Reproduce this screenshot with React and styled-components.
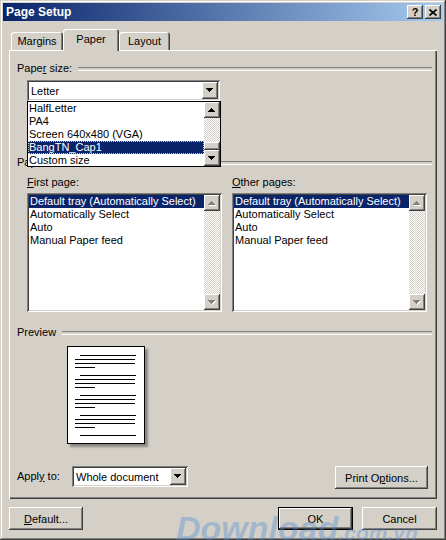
import React from 'react'
import styled, { createGlobalStyle } from 'styled-components'

const GlobalStyle = createGlobalStyle`
  body { margin: 0; background: #d4d0c8; }
  * { box-sizing: border-box; }
`

const raised = `box-shadow: inset -1px -1px #404040, inset 1px 1px #fff, inset -2px -2px #808080, inset 2px 2px #d4d0c8;`
const sunken = `box-shadow: inset 1px 1px #808080, inset -1px -1px #fff, inset 2px 2px #404040, inset -2px -2px #d4d0c8;`

const Window = styled.div`
  position: relative;
  width: 446px;
  height: 540px;
  padding-top: 3px;
  background: #d4d0c8;
  font-family: "Liberation Sans", Arial, sans-serif;
  font-size: 11px;
  color: #000;
  overflow: hidden;
  box-shadow: inset -1px -1px #404040, inset 1px 1px #d4d0c8, inset -2px -2px #808080, inset 2px 2px #fff;
`

const TitleBar = styled.div`
  margin: 0 3px;
  height: 18px;
  padding: 0 2px 0 3px;
  display: flex;
  align-items: center;
  justify-content: space-between;
  background: linear-gradient(to right, #0a246a, #a6caf0);
`

const Title = styled.span`
  color: #fff;
  font-weight: bold;
  font-size: 12px;
`

const TitleButtons = styled.div`
  display: flex;
  gap: 2px;
`

const TitleButton = styled.div`
  width: 16px;
  height: 14px;
  background: #d4d0c8;
  ${raised}
  display: flex;
  align-items: center;
  justify-content: center;
  font-weight: bold;
  font-size: 11px;
  line-height: 14px;
`

const Body = styled.div`
  padding: 8px 9px 0;
`

const Tabs = styled.div`
  display: flex;
  align-items: flex-end;
  height: 21px;
  padding-left: 2px;
`

const Tab = styled.div`
  position: relative;
  z-index: ${p => (p.$active ? 2 : 0)};
  width: ${p => p.$w}px;
  height: ${p => (p.$active ? 22 : 18)}px;
  margin-bottom: ${p => (p.$active ? -1 : 0)}px;
  padding-top: ${p => (p.$active ? 3 : 2)}px;
  background: #d4d0c8;
  border-radius: 3px 3px 0 0;
  box-shadow: inset 1px 1px #fff, inset -1px 0 #404040, inset -2px 0 #808080;
  text-align: center;
  line-height: 14px;
`

const Panel = styled.div`
  height: 449px;
  padding: 12px 5px 10px 8px;
  display: flex;
  flex-direction: column;
  box-shadow: inset 1px 1px #fff, inset -1px -1px #404040, inset -2px -2px #808080;
`

const Heading = styled.div`
  display: flex;
  align-items: center;
  gap: 6px;
  height: 13px;
  line-height: 13px;
  margin-top: ${p => p.$mt || 0}px;
  white-space: nowrap;
  &::after {
    content: '';
    flex: 1;
    height: 2px;
    border-top: 1px solid #808080;
    border-bottom: 1px solid #fff;
  }
`

const ComboWrap = styled.div`
  position: relative;
  z-index: 3;
  margin: ${p => p.$m || '0'};
  width: ${p => p.$w}px;
`

const Combo = styled.div`
  width: 100%;
  height: 21px;
  padding: 2px;
  display: flex;
  align-items: center;
  background: #fff;
  ${sunken}
`

const ComboText = styled.div`
  flex: 1;
  padding-left: 2px;
  white-space: nowrap;
`

const ArrowButton = styled.div`
  width: ${p => p.$w || 16}px;
  height: ${p => p.$h || 16}px;
  flex: none;
  display: flex;
  align-items: center;
  justify-content: center;
  background: #d4d0c8;
  ${raised}
`

const Popup = styled.div`
  position: absolute;
  top: 21px;
  left: 0;
  width: 194px;
  height: 66px;
  display: flex;
  background: #fff;
  border: 1px solid #000;
`

const Items = styled.div`
  flex: 1;
  min-width: 0;
  overflow: hidden;
`

const Item = styled.div`
  height: 13px;
  line-height: 13px;
  padding-left: 1px;
  white-space: nowrap;
  background: ${p => (p.$sel ? '#0a246a' : 'transparent')};
  color: ${p => (p.$sel ? '#fff' : '#000')};
  outline: ${p => (p.$focus ? '1px dotted #d4d0c8' : 'none')};
  outline-offset: -1px;
`

const Scrollbar = styled.div`
  width: 16px;
  flex: none;
  display: flex;
  flex-direction: column;
`

const Track = styled.div`
  flex: ${p => (p.$h ? 'none' : 1)};
  height: ${p => (p.$h ? `${p.$h}px` : 'auto')};
  background: repeating-conic-gradient(#fff 0 25%, #d4d0c8 0 50%) 0 0 / 2px 2px;
`

const Thumb = styled.div`
  height: 8px;
  background: #d4d0c8;
  ${raised}
`

const Trays = styled.div`
  margin: 7px 0 0 10px;
  display: grid;
  grid-template-columns: 195px 195px;
  gap: 10px;
`

const Label = styled.div`
  height: 13px;
  line-height: 13px;
`

const ListBox = styled.div`
  margin-top: 4px;
  height: 119px;
  padding: 2px;
  display: flex;
  background: #fff;
  ${sunken}
`

const PreviewPage = styled.div`
  margin: 7px 0 0 50px;
  width: 78px;
  height: 98px;
  padding: 8px 0 0 7px;
  background: #fff;
  border: 1px solid #000;
  box-shadow: 3px 3px 2px rgba(0, 0, 0, 0.35);
  display: flex;
  flex-direction: column;
  gap: 7px;
`

const Para = styled.div`
  display: flex;
  flex-direction: column;
  gap: 3px;
`

const TextLine = styled.div`
  height: 1px;
  background: #000;
  width: ${p => p.$w}px;
  margin-left: ${p => p.$indent || 0}px;
`

const ApplyRow = styled.div`
  margin-top: auto;
  display: flex;
  align-items: flex-start;
`

const ApplyLabel = styled.div`
  width: 55px;
  line-height: 21px;
`

const Button = styled.div`
  width: ${p => p.$w}px;
  height: 23px;
  margin: ${p => p.$m || '0'};
  display: flex;
  align-items: center;
  justify-content: center;
  background: #d4d0c8;
  ${p =>
    p.$default
      ? 'box-shadow: inset 0 0 0 1px #000, inset -2px -2px #404040, inset 2px 2px #fff, inset -3px -3px #808080;'
      : raised}
`

const Footer = styled.div`
  display: flex;
  gap: 9px;
  margin-top: 8px;
`

const Watermark = styled.div`
  position: absolute;
  left: 176px;
  top: 509px;
  font-family: "Liberation Sans", Arial, sans-serif;
  font-weight: bold;
  font-style: italic;
  font-size: 34px;
  color: rgba(80, 140, 210, 0.38);
  white-space: nowrap;
  pointer-events: none;
  & small {
    font-size: 21px;
  }
`

const Arrow = ({ up, disabled }) => {
  const d = up
    ? 'M3 0h1v1H3z M2 1h3v1H2z M1 2h5v1H1z M0 3h7v1H0z'
    : 'M0 0h7v1H0z M1 1h5v1H1z M2 2h3v1H2z M3 3h1v1H3z'
  return (
    <svg width="8" height="5" viewBox="0 0 8 5" shapeRendering="crispEdges">
      {disabled && <path d={d} fill="#fff" transform="translate(1 1)" />}
      <path d={d} fill={disabled ? '#808080' : '#000'} />
    </svg>
  )
}

const trays = ['Default tray (Automatically Select)', 'Automatically Select', 'Auto', 'Manual Paper feed']
const sizes = ['HalfLetter', 'PA4', 'Screen 640x480 (VGA)', 'BangTN_Cap1', 'Custom size']

const TrayList = ({ label }) => (
  <div>
    <Label>{label}</Label>
    <ListBox>
      <Items>
        {trays.map((t, i) => (
          <Item key={t} $sel={i === 0}>{t}</Item>
        ))}
      </Items>
      <Scrollbar>
        <ArrowButton><Arrow up disabled /></ArrowButton>
        <Track />
        <ArrowButton><Arrow disabled /></ArrowButton>
      </Scrollbar>
    </ListBox>
  </div>
)

const para = (
  <Para>
    <TextLine $w={56} $indent={5} />
    <TextLine $w={60} />
    <TextLine $w={60} />
    <TextLine $w={20} />
  </Para>
)

export default function App() {
  return (
    <>
      <GlobalStyle />
      <Window>
        <TitleBar>
          <Title>Page Setup</Title>
          <TitleButtons>
            <TitleButton>?</TitleButton>
            <TitleButton>
              <svg width="8" height="7" viewBox="0 0 8 7">
                <path d="M0.5 0.5l7 6M7.5 0.5l-7 6" stroke="#000" strokeWidth="1.6" />
              </svg>
            </TitleButton>
          </TitleButtons>
        </TitleBar>
        <Body>
          <Tabs>
            <Tab $w={52}>Margins</Tab>
            <Tab $w={56} $active>Paper</Tab>
            <Tab $w={51}>Layout</Tab>
          </Tabs>
          <Panel>
            <Heading><span>Pape<u>r</u> size:</span></Heading>
            <ComboWrap $w={193} $m="5px 0 0 10px">
              <Combo>
                <ComboText>Letter</ComboText>
                <ArrowButton $h={17}><Arrow /></ArrowButton>
              </Combo>
              <Popup>
                <Items>
                  {sizes.map(s => (
                    <Item key={s} $sel={s === 'BangTN_Cap1'} $focus={s === 'BangTN_Cap1'}>{s}</Item>
                  ))}
                </Items>
                <Scrollbar>
                  <ArrowButton><Arrow up /></ArrowButton>
                  <Track $h={24} />
                  <Thumb />
                  <ArrowButton><Arrow /></ArrowButton>
                </Scrollbar>
              </Popup>
            </ComboWrap>
            <Heading $mt={55}><span>Paper source</span></Heading>
            <Trays>
              <TrayList label={<><u>F</u>irst page:</>} />
              <TrayList label={<><u>O</u>ther pages:</>} />
            </Trays>
            <Heading $mt={14}><span>Preview</span></Heading>
            <PreviewPage>
              {para}
              {para}
              {para}
              {para}
              <Para>
                <TextLine $w={56} $indent={5} />
              </Para>
            </PreviewPage>
            <ApplyRow>
              <ApplyLabel>Appl<u>y</u> to:</ApplyLabel>
              <ComboWrap $w={116}>
                <Combo>
                  <ComboText>Whole document</ComboText>
                  <ArrowButton $h={17}><Arrow /></ArrowButton>
                </Combo>
              </ComboWrap>
              <Button $w={93} $m="0 4px 0 auto"><span>Print O<u>p</u>tions...</span></Button>
            </ApplyRow>
          </Panel>
          <Footer>
            <Button $w={74}><span><u>D</u>efault...</span></Button>
            <Button $w={75} $m="0 0 0 auto" $default>OK</Button>
            <Button $w={75}>Cancel</Button>
          </Footer>
        </Body>
        <Watermark>Download<small>.com.vn</small></Watermark>
      </Window>
    </>
  )
}
